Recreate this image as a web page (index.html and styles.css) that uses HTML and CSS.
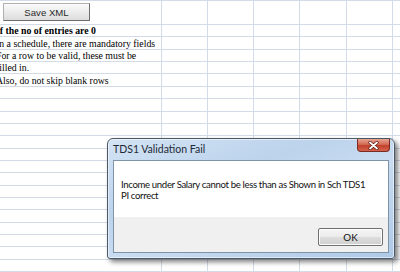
FILE: index.html
```html
<!DOCTYPE html>
<html lang="en">
<head>
    <meta charset="UTF-8">
    <meta name="viewport" content="width=device-width, initial-scale=1.0">
    <title>TDS1 Validation</title>
    <link rel="stylesheet" href="styles.css">
</head>
<body>
    <div class="sheet">
        <div class="row row-head">
            <button class="save-btn">Save XML</button>
        </div>
        <div class="row"><span class="cell-text bold">If the no of entries are 0</span></div>
        <div class="row"><span class="cell-text">In a schedule, there are mandatory fields</span></div>
        <div class="row"><span class="cell-text">For a row to be valid, these must be</span></div>
        <div class="row"><span class="cell-text">filled in.</span></div>
        <div class="row"><span class="cell-text">Also, do not skip blank rows</span></div>
        <div class="row"></div>
        <div class="row"></div>
        <div class="row"></div>
        <div class="row"></div>
        <div class="row"></div>
        <div class="row"></div>
        <div class="row"></div>
        <div class="row"></div>
        <div class="row"></div>
        <div class="row"></div>
        <div class="row"></div>
        <div class="row"></div>
        <div class="row"></div>
        <div class="row"></div>
        <div class="row"></div>
    </div>

    <!-- message box floats over the worksheet -->
    <div class="dialog">
        <div class="titlebar">
            <span class="title">TDS1 Validation Fail</span>
            <button class="close-btn" aria-label="Close">
                <svg width="11" height="9" viewBox="0 0 11 9">
                    <path d="M2 1.5 L9 7.5 M9 1.5 L2 7.5" stroke="#5a1a12" stroke-width="3.2" stroke-linecap="round"/>
                    <path d="M2 1.5 L9 7.5 M9 1.5 L2 7.5" stroke="#ffffff" stroke-width="1.8" stroke-linecap="round"/>
                </svg>
            </button>
        </div>
        <div class="client">
            <div class="message">Income under Salary cannot be less than as Shown in Sch TDS1<br>PI correct</div>
            <div class="actions">
                <button class="ok-btn">OK</button>
            </div>
        </div>
    </div>
</body>
</html>
```

FILE: styles.css
```css
html, body {
    margin: 0;
    width: 400px;
    height: 272px;
    overflow: hidden;
    background: #ffffff;
}
.sheet {
    border-top: 1px solid #d4dbe8;
    background:
        linear-gradient(#d4dbe8, #d4dbe8) 161px 0 / 1px 100% no-repeat,
        linear-gradient(#d4dbe8, #d4dbe8) 207px 0 / 1px 100% no-repeat,
        linear-gradient(#d4dbe8, #d4dbe8) 253px 0 / 1px 100% no-repeat,
        linear-gradient(#d4dbe8, #d4dbe8) 299px 0 / 1px 100% no-repeat,
        linear-gradient(#d4dbe8, #d4dbe8) 346px 0 / 1px 100% no-repeat,
        linear-gradient(#d4dbe8, #d4dbe8) 392px 0 / 1px 100% no-repeat,
        #ffffff;
}
.row {
    box-sizing: border-box;
    height: 12.37px;
    border-bottom: 1px solid #d4dbe8;
    display: flex;
    align-items: flex-end;
    white-space: nowrap;
}
.row-head {
    height: 24px;
    align-items: flex-start;
    padding: 2px 0 0 3px;
}
.cell-text {
    margin-left: -4px;
    font-family: "Liberation Serif", "Times New Roman", serif;
    font-size: 9.8px;
    line-height: 11px;
    color: #000000;
}
.bold {
    font-weight: bold;
}
.save-btn {
    box-sizing: border-box;
    width: 87px;
    height: 18px;
    padding: 0;
    font-family: "Liberation Sans", Arial, sans-serif;
    font-size: 9.6px;
    color: #2a2a2a;
    background: linear-gradient(#fbfbfb, #ececec 50%, #dcdcdc);
    border: 1px solid #b0b0b0;
    border-right-color: #6e6e6e;
    border-bottom-color: #6e6e6e;
}

.dialog {
    position: absolute;
    left: 107px;
    top: 138px;
    width: 288px;
    box-sizing: border-box;
    padding: 0 5px 5px 5px;
    border: 1px solid #4b5866;
    border-radius: 6px 6px 3px 3px;
    background: linear-gradient(160deg, #d3e3f4 0%, #bcd3ec 35%, #c9dcf1 55%, #aec9e7 100%);
    box-shadow: inset 0 0 0 1px rgba(255, 255, 255, 0.55), 3px 3px 5px rgba(0, 0, 0, 0.5);
}
.titlebar {
    height: 21px;
    display: flex;
    justify-content: space-between;
    align-items: flex-start;
}
.title {
    margin-top: 4px;
    font-family: Lato, "Noto Sans", sans-serif;
    font-size: 10.5px;
    line-height: 12px;
    color: #1e2a36;
}
.close-btn {
    box-sizing: border-box;
    width: 33px;
    height: 13px;
    margin: 0 -1px 0 0;
    padding: 0;
    display: flex;
    align-items: center;
    justify-content: center;
    border: 1px solid #7b2b22;
    border-top: none;
    border-radius: 0 0 4px 4px;
    background: linear-gradient(#e6a493, #d46b55 45%, #c2412c 55%, #d4634c);
}
.client {
    border: 1px solid #7e92a8;
    background: #ffffff;
}
.message {
    height: 56px;
    box-sizing: border-box;
    padding: 18px 0 0 7px;
    font-family: Lato, "Noto Sans", sans-serif;
    font-size: 9.6px;
    letter-spacing: -0.35px;
    line-height: 11px;
    color: #111111;
    white-space: nowrap;
}
.actions {
    height: 35px;
    box-sizing: border-box;
    padding: 11px 5px 0 0;
    background: #f0f0f0;
    display: flex;
    justify-content: flex-end;
    align-items: flex-start;
}
.ok-btn {
    box-sizing: border-box;
    width: 65px;
    height: 18px;
    padding: 0;
    font-family: Lato, "Noto Sans", sans-serif;
    font-size: 9.8px;
    color: #111111;
    border: 1px solid #707070;
    border-radius: 2px;
    background: linear-gradient(#f4f4f4, #ebebeb 50%, #dddddd 51%, #cfcfcf);
    box-shadow: inset 0 0 0 1px #fcfcfc;
}
```
